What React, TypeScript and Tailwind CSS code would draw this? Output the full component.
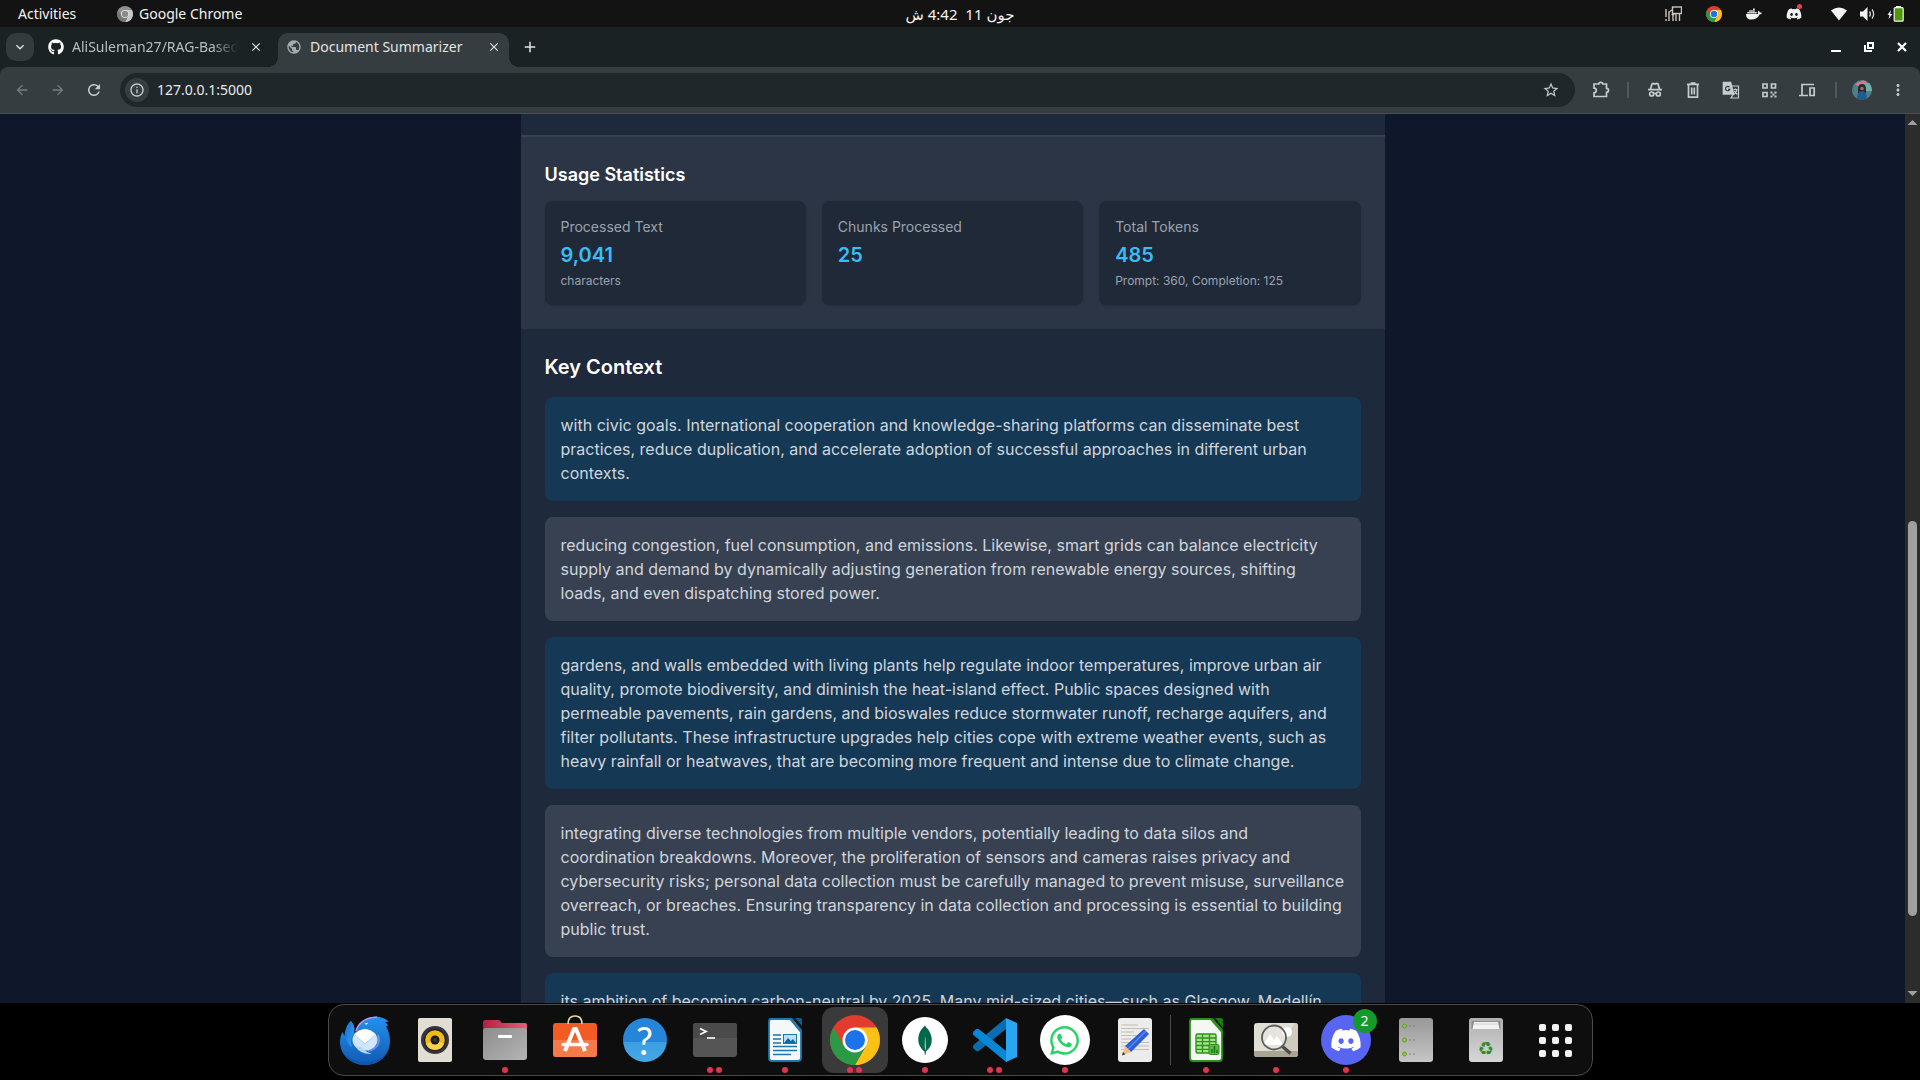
import type { ReactNode } from "react";
import { FaDiscord, FaDocker, FaGithub, FaWhatsapp } from "react-icons/fa";
import { SiMongodb } from "react-icons/si";
import {
  MdArrowBack,
  MdArrowForward,
  MdClose,
  MdAdd,
  MdInfoOutline,
  MdKeyboardArrowDown,
  MdMoreVert,
  MdPublic,
  MdRefresh,
  MdStarBorder,
} from "react-icons/md";

function ChromeLogo({ size, mono = false }: { size: number; mono?: boolean }) {
  const c = mono
    ? { r: "#8f8f8f", y: "#c8c8c8", g: "#777777", b: "#8a8a8a", w: "#e8e8e8" }
    : { r: "#e33b2e", y: "#fbc116", g: "#2b9a47", b: "#1a73e8", w: "#ffffff" };
  return (
    <svg width={size} height={size} viewBox="0 0 50 50" aria-hidden="true">
      <circle cx="25" cy="25" r="25" fill={c.r} />
      <path d="M25 12.5H46.6A25 25 0 0 1 25 50L35.8 31.2Z" fill={c.y} />
      <path d="M3.4 12.5 14.2 31.2 25 37.5 35.8 31.2 25 50A25 25 0 0 1 3.4 12.5Z" fill={c.g} />
      <circle cx="25" cy="25" r="12.5" fill={c.w} />
      <circle cx="25" cy="25" r="10" fill={c.b} />
    </svg>
  );
}

function TopBar() {
  return (
    <header className="grid h-[27px] shrink-0 grid-cols-[1fr_auto_1fr] items-center bg-[#131313] text-sm leading-5 text-[#f2f2f2]">
      <div className="flex items-center pl-[18px]">
        <button className="w-[99px] text-left">Activities</button>
        <button className="flex items-center gap-1.5">
          <ChromeLogo size={16} mono />
          <span>Google Chrome</span>
        </button>
      </div>
      <time dir="rtl" lang="ur" className="whitespace-pre text-[15px] font-['Noto_Sans','DejaVu_Sans',sans-serif]">
        جون 11  4:42 ش
      </time>
      <div className="flex items-center justify-end pr-4">
        <svg width="17" height="16" viewBox="0 0 17 16" fill="none" stroke="#c9c5bd" strokeWidth="1.4" className="mr-6" aria-label="Monitor">
          <path d="M1 3v8M1 13v2M4 15V5.500M4 6l3-2M8 15V8M11 8v7M14.500 8v7M6.500 8.500h3" />
          <rect x="7.500" y="1" width="9" height="6.500" />
        </svg>
        <span className="mr-6"><ChromeLogo size={16} /></span>
        <FaDocker className="mr-6 size-4" />
        <span className="relative mr-[29px] flex">
          <FaDiscord className="size-4" />
          <i className="absolute -top-0.5 right-0 size-[5px] rounded-full bg-[#ed4245]" />
        </span>
        <svg width="16" height="14" viewBox="0 0 16 14" className="mr-[13px]" aria-label="Wi-Fi">
          <path d="M0 3.500Q8-2.500 16 3.500L8 13.500Z" fill="#f2f2f2" />
        </svg>
        <svg width="15" height="14" viewBox="0 0 15 14" className="mr-3" aria-label="Volume">
          <path d="M0 4.500h3L7.500 0v14L3 9.500H0Z" fill="#f2f2f2" />
          <path d="M9.500 4.500q1.800 2.500 0 5M12 2.500q3.300 4.500 0 9" fill="none" stroke="#d8d8d8" strokeWidth="1.300" />
        </svg>
        <svg width="17" height="16" viewBox="0 0 17 16" aria-label="Battery charging">
          <path d="M4 4 0.500 9H2.500L1.500 13 5.500 8H3.300Z" fill="#f2f2f2" />
          <rect x="9" y="0" width="5" height="2" fill="#f2f2f2" />
          <rect x="7.200" y="1.700" width="9" height="13.500" rx="1" fill="#4e9a06" stroke="#f2f2f2" strokeWidth="1.200" />
        </svg>
      </div>
    </header>
  );
}

function TabStrip() {
  return (
    <div className="flex h-10 shrink-0 bg-[#1a2224] pt-1.5 text-sm leading-5 text-[#e3e3e3]">
      <button aria-label="Search tabs" className="ml-1.5 flex size-7 items-center justify-center rounded-[10px] bg-[#333b3d]">
        <MdKeyboardArrowDown className="size-4" />
      </button>
      <div className="flex h-7 w-[244px] items-center pl-3.5 text-[#b8bfc2]">
        <FaGithub className="size-4 shrink-0 text-white" />
        <span className="ml-2 w-[166px] overflow-hidden whitespace-nowrap [mask-image:linear-gradient(to_right,black_85%,transparent)]">
          AliSuleman27/RAG-Based
        </span>
        <button aria-label="Close AliSuleman27 tab" className="ml-[11px] text-[#e3e3e3]">
          <MdClose className="size-3.5" />
        </button>
      </div>
      <div className="relative flex w-[231px] items-start rounded-t-[10px] bg-[#363d40] pl-2">
        <i className="absolute bottom-0 -left-2.5 size-2.5 bg-[radial-gradient(circle_at_0_0,transparent_10px,#363d40_10px)]" />
        <i className="absolute -right-2.5 bottom-0 size-2.5 bg-[radial-gradient(circle_at_100%_0,transparent_10px,#363d40_10px)]" />
        <div className="flex h-7 w-full items-center">
          <MdPublic className="size-4 shrink-0 text-[#a5abae]" />
          <span className="ml-2 w-[177px] whitespace-nowrap">Document Summarizer</span>
          <button aria-label="Close Document Summarizer tab">
            <MdClose className="size-3.5" />
          </button>
        </div>
      </div>
      <button aria-label="New tab" className="ml-3 flex h-7 items-center">
        <MdAdd className="size-[18px]" />
      </button>
      <div className="ml-auto flex h-7 items-center gap-[23px] pr-[13px]">
        <button aria-label="Minimize">
          <svg width="10" height="10" viewBox="0 0 10 10"><path d="M0 9h10" stroke="#fff" strokeWidth="2" /></svg>
        </button>
        <button aria-label="Restore">
          <svg width="10" height="10" viewBox="0 0 10 10" fill="none" stroke="#fff" strokeWidth="2">
            <path d="M4 1h5v5H4ZM1 3v6h7" />
          </svg>
        </button>
        <button aria-label="Close window">
          <svg width="10" height="10" viewBox="0 0 10 10"><path d="m1 1 8 8M9 1 1 9" stroke="#fff" strokeWidth="2.200" /></svg>
        </button>
      </div>
    </div>
  );
}

function ToolIcon({ label, children }: { label: string; children: ReactNode }) {
  return (
    <button aria-label={label} className="flex w-[38px] justify-center">
      <svg width="18" height="18" viewBox="0 0 18 18" fill="none" stroke="currentColor" strokeWidth="1.700">
        {children}
      </svg>
    </button>
  );
}

function Toolbar() {
  return (
    <div className="bg-[#1a2224]">
      <div className="flex h-[47px] shrink-0 items-center rounded-t-lg border-b border-[#4a5052] bg-[#363d40] text-[#c4cccf]">
        <div className="flex w-[120px] items-center pl-3.5">
          <button aria-label="Back" className="mr-5 text-[#777e81]"><MdArrowBack className="size-4" /></button>
          <button aria-label="Forward" className="mr-[19px] text-[#777e81]"><MdArrowForward className="size-4" /></button>
          <button aria-label="Reload"><MdRefresh className="size-[18px]" /></button>
        </div>
        <div className="flex h-[34px] flex-1 items-center rounded-full bg-[#20272a] pr-[15px] pl-[5px]">
          <button aria-label="View site information" className="flex size-6 items-center justify-center rounded-full bg-[#363d40]">
            <MdInfoOutline className="size-4" />
          </button>
          <input
            aria-label="Address"
            readOnly
            value="127.0.0.1:5000"
            className="ml-2 min-w-0 flex-1 bg-transparent text-sm leading-5 text-[#e8eaed] outline-none font-['Noto_Sans',sans-serif]"
          />
          <button aria-label="Bookmark this tab"><MdStarBorder className="size-[18px]" /></button>
        </div>
        <div className="flex items-center pl-[7px]">
          <ToolIcon label="Extensions">
            <path d="M2.500 3h4.300a2 1.700 0 0 1 4 0H14.500V7.300a2 2 0 0 1 0 4V15.500H2V11.800a2.300 2.300 0 0 0 0-4.600V3Z" />
          </ToolIcon>
          <i className="mx-[7px] h-4 w-0.5 bg-[#50585b]" />
          <ToolIcon label="Incognito extension">
            <path d="M2 8.700h14M4.500 8 6 3l1.500-.5L9 3l1.500-.5L12 3l1.500 5" />
            <circle cx="5.700" cy="13" r="2" />
            <circle cx="12.300" cy="13" r="2" />
            <path d="M7.700 12.700q1.300-.9 2.600 0" />
          </ToolIcon>
          <ToolIcon label="Clear data">
            <path d="M3 3.300h12M6.500 2h5M4.500 3.500v12.700h9V3.500M7.700 6.500v7M10.300 6.500v7" />
          </ToolIcon>
          <ToolIcon label="Translate">
            <path d="M1.500 1.500h7l3 11.500h-10Z" fill="currentColor" />
            <path d="M10 5h6.500v12H9l2.500-4M11.500 8.500h4M13.500 7.500v1M15 9q-1 3-3.500 4.500M12.300 10l3 3.500" strokeWidth="1.200" />
            <path d="M7.500 6.200A2.200 2.200 0 1 0 7.800 8.300H6" stroke="#363d40" strokeWidth="1.200" />
          </ToolIcon>
          <ToolIcon label="QR code">
            <path d="M3 3h4v4H3ZM11.500 3h4v4h-4ZM3 11.500h4v4H3Z" />
            <path d="M10.500 10.500h2v2h-2zM14.500 10.500h2v2h-2zM12.500 12.500h2v2h-2zM10.500 14.500h2v2h-2zM14.500 14.500h2v2h-2z" fill="currentColor" stroke="none" />
          </ToolIcon>
          <ToolIcon label="Send to devices">
            <path d="M16 3.500H4V14M1 14.500h9M12 7h4.200v7.500H12Z" />
          </ToolIcon>
          <i className="mr-[15px] ml-[9px] h-4 w-0.5 bg-[#50585b]" />
          <button aria-label="Profile" className="mr-[17px]">
            <svg width="20" height="20" viewBox="0 0 20 20">
              <clipPath id="avatar"><circle cx="10" cy="10" r="10" /></clipPath>
              <g clipPath="url(#avatar)">
                <path d="M0 0h20v20H0z" fill="#4e7f86" />
                <path d="M3 4 12 0l3 3-9 3Z" fill="#d87890" />
                <path d="M12 3h8v8h-6Z" fill="#6db0ad" />
                <path d="M6 9q0-5 4-5t4 5v4H6Z" fill="#2b2a2c" />
                <circle cx="10" cy="8.500" r="1.700" fill="#a4745c" />
                <path d="M5 20q0-9 5-9t5 9Z" fill="#1d5c8c" />
              </g>
            </svg>
          </button>
          <button aria-label="Menu" className="mr-[13px]"><MdMoreVert className="size-[18px]" /></button>
        </div>
      </div>
    </div>
  );
}

const stats = [
  { label: "Processed Text", value: "9,041", note: "characters" },
  { label: "Chunks Processed", value: "25" },
  { label: "Total Tokens", value: "485", note: "Prompt: 360, Completion: 125" },
];

const contexts = [
  "with civic goals. International cooperation and knowledge-sharing platforms can disseminate best practices, reduce duplication, and accelerate adoption of successful approaches in different urban contexts.",
  "reducing congestion, fuel consumption, and emissions. Likewise, smart grids can balance electricity supply and demand by dynamically adjusting generation from renewable energy sources, shifting loads, and even dispatching stored power.",
  "gardens, and walls embedded with living plants help regulate indoor temperatures, improve urban air quality, promote biodiversity, and diminish the heat-island effect. Public spaces designed with permeable pavements, rain gardens, and bioswales reduce stormwater runoff, recharge aquifers, and filter pollutants. These infrastructure upgrades help cities cope with extreme weather events, such as heavy rainfall or heatwaves, that are becoming more frequent and intense due to climate change.",
  "integrating diverse technologies from multiple vendors, potentially leading to data silos and coordination breakdowns. Moreover, the proliferation of sensors and cameras raises privacy and cybersecurity risks; personal data collection must be carefully managed to prevent misuse, surveillance overreach, or breaches. Ensuring transparency in data collection and processing is essential to building public trust.",
  "its ambition of becoming carbon-neutral by 2025. Many mid-sized cities—such as Glasgow, Medellín,",
];

function Summarizer() {
  return (
    <main className="min-w-0 flex-1 overflow-hidden bg-slate-900 px-4 font-['Inter',sans-serif] text-base text-white">
      <div className="mx-auto max-w-[864px] bg-[#1e293b] pt-[21px]">
        <section className="border-t-2 border-[#374151] bg-[#2b3546] p-6">
          <h3 className="mb-3 text-lg leading-7 font-semibold">Usage Statistics</h3>
          <div className="grid grid-cols-3 gap-4">
            {stats.map((s) => (
              <div key={s.label} className="rounded-lg bg-[#1f2937] p-4 shadow-sm">
                <p className="text-sm leading-5 text-[#9ca3af]">{s.label}</p>
                <p className="mt-1 text-xl leading-7 font-semibold text-[#38bdf8]">{s.value}</p>
                {s.note && <p className="mt-1 text-xs leading-4 text-[#9ca3af]">{s.note}</p>}
              </div>
            ))}
          </div>
        </section>
        <section className="p-6">
          <h2 className="mb-4 text-xl leading-7 font-semibold">Key Context</h2>
          <div className="flex flex-col gap-4">
            {contexts.map((text) => (
              <p key={text} className="rounded-lg p-4 leading-6 text-[#d1d5db] odd:bg-[#153854] even:bg-[#374151]">
                {text}
              </p>
            ))}
          </div>
        </section>
      </div>
    </main>
  );
}

function Scrollbar() {
  return (
    <div className="flex w-[15px] shrink-0 flex-col items-center bg-[#2c2c2c]" aria-hidden="true">
      <svg width="15" height="15" viewBox="0 0 15 15" className="shrink-0"><path d="m7.500 6 5 5h-10Z" fill="#a0a0a0" /></svg>
      <i className="grow-[392] basis-0" />
      <i className="w-[9px] grow-[395] basis-0 rounded-full bg-[#a0a0a0]" />
      <i className="grow-[72] basis-0" />
      <svg width="15" height="15" viewBox="0 0 15 15" className="shrink-0"><path d="M2.500 3h10l-5 5Z" fill="#a0a0a0" /></svg>
    </div>
  );
}

function Art({ children }: { children: ReactNode }) {
  return (
    <svg width="50" height="50" viewBox="0 0 50 50" fill="none" aria-hidden="true">
      {children}
    </svg>
  );
}

const mailArt = (
  <Art>
    <defs>
      <linearGradient id="bird" x1="0" y1="0" x2="0" y2="1"><stop stopColor="#2293ee" /><stop offset="1" stopColor="#1259b4" /></linearGradient>
      <linearGradient id="wing" x1="0" y1="0" x2="1" y2="1"><stop stopColor="#1a72d8" /><stop offset="1" stopColor="#38a2f4" /></linearGradient>
    </defs>
    <path d="M16 16C18 8 25 2 36 1.500c5 .3 9 2 13 5l-4 .5 3.500 3.500-2.500.5C49 17 50 21 50 26c0 14-11 24-25 24S0 40 0 27c0-4 .8-7 2.500-10l2 4C5 15 7 9 11 6c3 4 4 7 3 12Z" fill="url(#bird)" />
    <path d="M1 29c0 10 10 18 24 18 9 0 18-3 23-12-3 9-12 15-23 15S2 42 1 29Z" fill="#0f55a8" />
    <path d="M11 6c3 4 4 7 3 12-3 4-4 9-2 14C4 28 5 14 11 6Z" fill="url(#wing)" />
    <path d="M16 16C18 8 26 2 37 2.200" stroke="#c58cf2" strokeWidth="1.500" />
    <path d="M38 20c3 8-1 14-10 16" stroke="#6f8bf0" strokeWidth="2" />
    <ellipse cx="25" cy="25" rx="12.500" ry="10.500" fill="#cfe6fb" />
    <path d="M14 20q11-12 22 0L25 29Z" fill="#fff" />
    <path d="m15 20 10 9 10-9" stroke="#a9cdf0" />
    <path d="M15 31q6 9 17 8-7-2-10-7Z" fill="#b5d8fb" />
    <path d="m24 9 4-1.500-1 2Z" fill="#fff" />
  </Art>
);

const speakerArt = (
  <Art>
    <rect x="8" y="3" width="34" height="44" rx="2" fill="#e3ded3" />
    <circle cx="25" cy="25" r="14" fill="#34343c" />
    <circle cx="25" cy="25" r="11" fill="#1e1e22" />
    <circle cx="25" cy="25" r="9.800" fill="#f0b91a" />
    <path d="M16 29a9.800 9.800 0 0 0 18 0L25 25Z" fill="#fad24c" />
    <circle cx="25" cy="25" r="4.500" fill="#1b1b1b" />
    <circle cx="25" cy="25" r="2" fill="#3a3a3a" />
  </Art>
);

const filesArt = (
  <Art>
    <defs>
      <linearGradient id="folder" x1="0" y1="0" x2="1" y2="1"><stop stopColor="#8d8d8d" /><stop offset="1" stopColor="#b4b4b4" /></linearGradient>
      <linearGradient id="flap" x1="0" y1="0" x2="1" y2="0"><stop stopColor="#b4203f" /><stop offset="1" stopColor="#e26078" /></linearGradient>
    </defs>
    <path d="M3 7q0-2 2-2h13q2 0 3 2l1 1h23q2 0 2 2v10H3Z" fill="url(#flap)" />
    <rect x="3" y="13" width="44" height="32" rx="3" fill="url(#folder)" />
    <rect x="18" y="20" width="14" height="3" rx="1" fill="#fff" />
  </Art>
);

const softwareArt = (
  <Art>
    <rect x="3" y="8" width="44" height="34" rx="3" fill="#f25c24" />
    <path d="M3 25h44v14q0 3-3 3H6q-3 0-3-3Z" fill="#f47a4a" />
    <path d="M18 9q0-8 7-8t7 8" stroke="#f2dcae" strokeWidth="1.600" />
    <path d="m15 36 9-22h2l9 22" stroke="#fff" strokeWidth="4" strokeLinejoin="round" />
    <path d="M13 29.500h24" stroke="#fff" strokeWidth="3.500" strokeLinecap="round" />
  </Art>
);

const helpArt = (
  <span className="flex size-[44px] items-center justify-center rounded-full bg-[linear-gradient(#2585d8_54%,#3a9ee0_54%,#46a8e6)] text-[38px] leading-none text-white font-['Lato',sans-serif]">
    ?
  </span>
);

const terminalArt = (
  <Art>
    <rect x="3" y="8" width="44" height="34" rx="3" fill="#555" />
    <path d="M3 23V11q0-3 3-3h38q3 0 3 3v12Z" fill="#4a4a4a" />
    <path d="m10 13.500 6 3-6 3" stroke="#fff" strokeWidth="1.800" />
    <path d="M17 23h8" stroke="#fff" strokeWidth="1.600" />
  </Art>
);

const writerArt = (
  <Art>
    <path d="M11 4h20L41 16v27q0 3-3 3H12q-3 0-3-3V7q0-3 2-3Z" fill="#f5f7f8" stroke="#1a78ae" strokeWidth="1.800" />
    <path d="M35 3h5q2 0 2 2v6Z" fill="#0e5f91" />
    <path d="M31 4 41 16" stroke="#1a78ae" strokeWidth="3" />
    <path d="M13 20h8M13 24h8M13 28h8M13 31.500h24M13 35.500h24M13 39.500h18" stroke="#1777b0" strokeWidth="1.500" />
    <rect x="23.500" y="19.500" width="13" height="9" fill="#b9e0f7" stroke="#1777b0" />
    <path d="m24 28 4-5 3 3 2-2 3 4Z" fill="#0c6aa3" />
  </Art>
);

const mongoArt = (
  <span className="flex size-[46px] items-center justify-center rounded-full bg-white">
    <SiMongodb className="size-[30px] text-[#00684a]" />
  </span>
);

const codeArt = (
  <Art>
    <path d="M3.500 33.500 6 35.700q1.500 1 3 0L36 14V3L4 29.500q-2 2-.5 4Z" fill="#0b6cb0" />
    <path d="M36 47 4 20.500q-2-2-.5-4L6 14.300q1.500-1 3 0L36 36Z" fill="#0a86d6" />
    <path d="M36 3 47 8v34l-11 5Z" fill="#29a5f2" />
  </Art>
);

const whatsappArt = (
  <span className="flex size-[50px] items-center justify-center rounded-full bg-white">
    <FaWhatsapp className="size-[33px] text-[#25d366]" />
  </span>
);

const editorArt = (
  <Art>
    <rect x="8" y="3" width="34" height="44" rx="3" fill="#ececec" />
    <path d="M11 10h17M11 13.500h28M11 17h13M11 20.500h20M11 24h10M11 27.500h28M11 31h28M11 34.500h28" stroke="#c3beb0" strokeWidth="1.200" />
    <path d="m34 14 5 5-18 18-6-6Z" fill="#2f5fd8" />
    <path d="m36 16-18 18" stroke="#5c88f2" strokeWidth="1.500" />
    <path d="m15 31 6 6-9 3.500Z" fill="#f2bd85" />
    <path d="m13 37 2.300 2.300L12 40.500Z" fill="#333" />
  </Art>
);

const calcArt = (
  <Art>
    <path d="M11 4h19L41 16v27q0 3-3 3H12q-3 0-3-3V7q0-3 2-3Z" fill="#f5f7f4" stroke="#2a9318" strokeWidth="1.800" />
    <path d="M34 3h6q2 0 2 2v8Z" fill="#1c7a10" />
    <path d="M30.500 4 41 16" stroke="#2a9318" strokeWidth="3" />
    <rect x="15" y="19" width="20" height="19" rx="1.500" fill="#a8e08e" stroke="#2a9318" strokeWidth="1.400" />
    <path d="M15 23h20M15 26.700h20M15 30.500h20M15 34.300h20M21.500 19v19M28.500 19v19" stroke="#2a9318" strokeWidth="1.300" />
    <rect x="28" y="29.500" width="10" height="10" rx="1.500" fill="#58b843" stroke="#2a9318" />
    <path d="M31 38v-4M33.500 38v-7M36 38v-3" stroke="#1b6f10" strokeWidth="1.400" />
  </Art>
);

const viewerArt = (
  <Art>
    <rect x="3" y="8" width="44" height="34" rx="3" fill="#e0dfd6" />
    <path d="M44 8q3 0 3 3v26H26Z" fill="#cfccbf" />
    <path d="M3 36h44v3q0 3-3 3H6q-3 0-3-3Z" fill="#aaa493" />
    <circle cx="36" cy="17" r="5" fill="#fff" />
    <path d="m12 30 7-11 4 6 3-4 6 9Z" fill="#fff" />
    <circle cx="23" cy="22.500" r="12" fill="#ffffff30" stroke="#5d5d5d" strokeWidth="1.800" />
    <path d="m31.500 31.500 8 7" stroke="#4d4d4d" strokeWidth="3.500" />
  </Art>
);

const discordArt = (
  <span className="relative flex size-[50px] items-center justify-center rounded-full bg-[#5865f2]">
    <FaDiscord className="size-8 text-white" />
    <span className="absolute -top-1.5 -right-1.5 flex size-6 items-center justify-center rounded-full bg-[#149a2a] text-sm leading-5 text-white">
      2
    </span>
  </span>
);

const serverArt = (
  <Art>
    <defs><linearGradient id="metal" x1="0" y1="0" x2="0" y2="1"><stop stopColor="#989898" /><stop offset="1" stopColor="#c6c6c6" /></linearGradient></defs>
    <rect x="8" y="3" width="34" height="44" rx="3" fill="url(#metal)" />
    {[11, 25, 39].map((y) => (
      <g key={y}>
        <circle cx="13.500" cy={y} r="2" fill="#8ac63c" stroke="#6f9c34" />
        <circle cx="19" cy={y} r=".8" fill="#777" />
        <circle cx="23" cy={y} r=".8" fill="#777" />
      </g>
    ))}
  </Art>
);

const trashArt = (
  <span className="relative flex">
    <Art>
      <defs><linearGradient id="bin" x1="0" y1="0" x2="0" y2="1"><stop stopColor="#b0b0b0" /><stop offset="1" stopColor="#d6d6d6" /></linearGradient></defs>
      <rect x="8" y="3" width="34" height="44" rx="3" fill="url(#bin)" />
      <path d="M10.500 6h29v8h-29Z" fill="#8b8b8b" />
      <path d="M13 7h24l1.500 7h-27Z" fill="#f3f3f3" />
      <path d="M13 9h24" stroke="#cfcfcf" />
    </Art>
    <span className="absolute inset-x-0 top-6 text-center text-lg leading-5 text-[#2e8b2e] font-['DejaVu_Sans',sans-serif]">♻</span>
  </span>
);

const gridArt = (
  <span className="grid grid-cols-3 gap-1.5">
    {Array.from({ length: 9 }, (_, i) => (
      <i key={i} className="size-[7px] rounded-[2px] bg-[#f2f2f2]" />
    ))}
  </span>
);

type DockApp = { name: string; art: ReactNode; windows?: number; active?: boolean };

const favourites: DockApp[] = [
  { name: "Thunderbird", art: mailArt },
  { name: "Rhythmbox", art: speakerArt },
  { name: "Files", art: filesArt, windows: 1 },
  { name: "Software", art: softwareArt },
  { name: "Help", art: helpArt },
  { name: "Terminal", art: terminalArt, windows: 2 },
  { name: "Writer", art: writerArt, windows: 1 },
  { name: "Google Chrome", art: <ChromeLogo size={50} />, windows: 2, active: true },
  { name: "MongoDB Compass", art: mongoArt, windows: 1 },
  { name: "Visual Studio Code", art: codeArt, windows: 2 },
  { name: "WhatsApp", art: whatsappArt, windows: 1 },
  { name: "Text Editor", art: editorArt },
];

const running: DockApp[] = [
  { name: "Calc", art: calcArt, windows: 1 },
  { name: "Image Viewer", art: viewerArt, windows: 1 },
  { name: "Discord", art: discordArt, windows: 1 },
  { name: "Disk", art: serverArt },
  { name: "Trash", art: trashArt },
  { name: "Show Applications", art: gridArt },
];

function DockItem({ app }: { app: DockApp }) {
  return (
    <button
      aria-label={app.name}
      className={`relative flex size-[66px] items-center justify-center rounded-xl ${app.active ? "bg-[#3a3a3a]" : ""}`}
    >
      {app.art}
      <span className="absolute inset-x-0 bottom-0 flex justify-center gap-[3px]">
        {Array.from({ length: app.windows ?? 0 }, (_, i) => (
          <i key={i} className="size-1.5 rounded-full bg-[#e0344f]" />
        ))}
      </span>
    </button>
  );
}

function Dock() {
  return (
    <footer className="flex h-[77px] shrink-0 justify-center bg-black pt-px pb-1">
      <nav aria-label="Dock" className="flex items-center gap-1 rounded-2xl border border-[#4a4a4a] bg-[#0e0e0e] px-[3px]">
        {favourites.map((app) => <DockItem key={app.name} app={app} />)}
        <i className="-mx-0.5 h-[50px] w-px bg-[#4a4a4a]" />
        {running.map((app) => <DockItem key={app.name} app={app} />)}
      </nav>
    </footer>
  );
}

export default function App() {
  return (
    <div className="flex h-screen flex-col overflow-hidden bg-black font-['Noto_Sans',sans-serif]">
      <TopBar />
      <TabStrip />
      <Toolbar />
      <div className="flex min-h-0 flex-1">
        <Summarizer />
        <Scrollbar />
      </div>
      <Dock />
    </div>
  );
}
